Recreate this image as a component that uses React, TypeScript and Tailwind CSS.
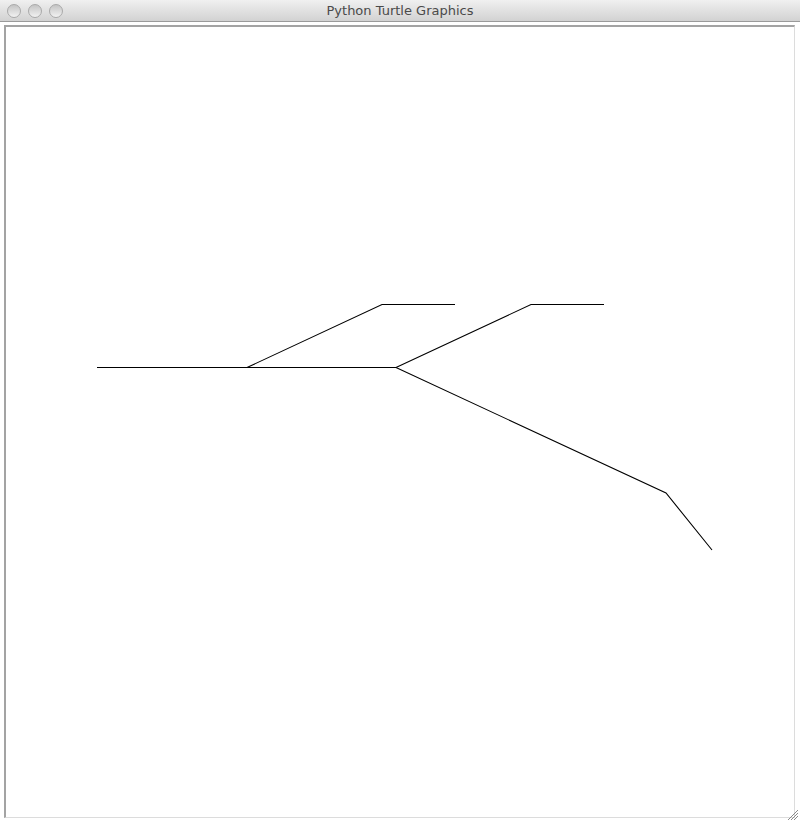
export default function App() {
    return (
        <div className="relative w-[800px] h-[822px] bg-white flex flex-col overflow-hidden" style={{ fontFamily: '"Lucida Grande", "DejaVu Sans", "Liberation Sans", sans-serif' }}>
            <div className="relative h-[22px] shrink-0 bg-gradient-to-b from-[#f0f0f0] to-[#d2d2d2] border-b border-[#9a9a9a] flex items-center">
                <div className="flex gap-[7px] pl-[7px]">
                    <span className="w-[14px] h-[14px] rounded-full border border-[#a9a9a9] bg-gradient-to-b from-[#c4c4c4] to-[#f2f2f2]"></span>
                    <span className="w-[14px] h-[14px] rounded-full border border-[#a9a9a9] bg-gradient-to-b from-[#c4c4c4] to-[#f2f2f2]"></span>
                    <span className="w-[14px] h-[14px] rounded-full border border-[#a9a9a9] bg-gradient-to-b from-[#c4c4c4] to-[#f2f2f2]"></span>
                </div>
                <div className="absolute inset-0 flex items-center justify-center text-[13px] text-[#4a4a4a]">
                    Python Turtle Graphics
                </div>
            </div>
            <div className="flex-1 pt-[3px] pl-[4px] pr-[5px] pb-[4px] flex">
                <div className="flex-1 bg-white border-t-2 border-l-2 border-t-[#a3a3a3] border-l-[#a3a3a3] border-r border-b border-r-[#dcdcdc] border-b-[#dcdcdc]"></div>
            </div>
            <svg className="absolute left-0 top-0 pointer-events-none" width="800" height="822" viewBox="0 0 800 822">
                <g stroke="#000" strokeWidth="1.1" fill="none">
                    <polyline points="97,367.5 396,367.5" />
                    <polyline points="247,367.5 382,304.5 455,304.5" />
                    <polyline points="396,367.5 531,304.5 604,304.5" />
                    <polyline points="396,367.5 666,493 712,550" />
                </g>
                <g stroke="#8a8a8a" strokeWidth="1">
                    <line x1="788" y1="820" x2="798" y2="810" />
                    <line x1="791" y1="820" x2="798" y2="813" />
                    <line x1="794" y1="820" x2="798" y2="816" />
                </g>
            </svg>
        </div>
    )
}
